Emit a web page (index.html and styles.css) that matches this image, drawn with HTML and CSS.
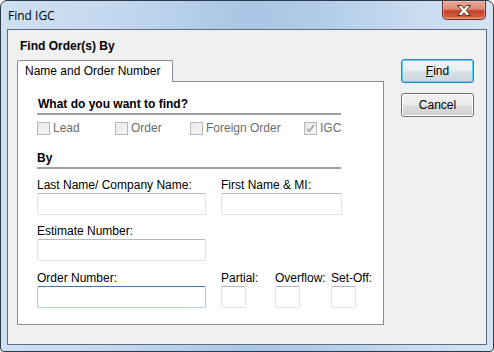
FILE: index.html
```html
<!DOCTYPE html>
<html>
<head>
<meta charset="utf-8">
<link rel="stylesheet" href="styles.css">
</head>
<body>
<div class="window">
  <div class="titlebar">
    <span class="title">Find IGC</span>
    <div class="close">
      <svg width="20" height="13" viewBox="0 0 20 13">
        <path d="M3.5 1.5 L7.5 1.5 L10 4.3 L12.5 1.5 L16.5 1.5 L12.3 6.5 L16.5 11.5 L12.5 11.5 L10 8.7 L7.5 11.5 L3.5 11.5 L7.7 6.5 Z" fill="#ffffff" stroke="#5a2a20" stroke-width="1" stroke-linejoin="round"/>
      </svg>
    </div>
  </div>
  <div class="client">
    <div class="left">
      <div class="header">Find Order(s) By</div>
      <div class="tabs"><div class="tab">Name and Order Number</div></div>
      <div class="panel">
        <div class="section-head">What do you want to find?</div>
        <div class="checks">
          <label class="check c-lead"><span class="box"></span>Lead</label>
          <label class="check c-order"><span class="box"></span>Order</label>
          <label class="check c-foreign"><span class="box"></span>Foreign Order</label>
          <label class="check"><span class="box checked"><svg width="11" height="11" viewBox="0 0 11 11"><path d="M2 5.5 L4.3 8.2 L9 2" fill="none" stroke="#a3a3a3" stroke-width="1.6"/></svg></span>IGC</label>
        </div>
        <div class="section-head by">By</div>
        <div class="row r1">
          <div class="field f-wide"><div class="lbl">Last Name/ Company Name:</div><div class="input w-wide"></div></div>
          <div class="field"><div class="lbl">First Name &amp; MI:</div><div class="input w-mid"></div></div>
        </div>
        <div class="row r2">
          <div class="field f-wide"><div class="lbl">Estimate Number:</div><div class="input w-wide"></div></div>
        </div>
        <div class="row r3">
          <div class="field f-wide"><div class="lbl">Order Number:</div><div class="input w-wide focus"></div></div>
          <div class="field f-partial"><div class="lbl">Partial:</div><div class="input w-small"></div></div>
          <div class="field f-overflow"><div class="lbl">Overflow:</div><div class="input w-small"></div></div>
          <div class="field"><div class="lbl">Set-Off:</div><div class="input w-small"></div></div>
        </div>
      </div>
    </div>
    <div class="buttons">
      <button class="btn default"><u>F</u>ind</button>
      <button class="btn">Cancel</button>
    </div>
  </div>
</div>
</body>
</html>
```

FILE: styles.css
```css
* { box-sizing: border-box; }
html, body { margin: 0; padding: 0; background: #ffffff; }
body { font-family: "Liberation Sans", Arial, sans-serif; font-size: 12px; color: #000; }

.window {
  width: 494px;
  height: 352px;
  border: 1px solid #2e3a48;
  border-radius: 7px 7px 4px 4px;
  padding: 0 6px 6px;
  background: linear-gradient(90deg, #cfe0f2 0%, #c2d7ee 25%, #a9c6e4 50%, #b2cce8 65%, #c9dcf0 85%, #d3e3f4 100%);
  display: flex;
  flex-direction: column;
}

.titlebar {
  height: 28px;
  display: flex;
  justify-content: space-between;
  align-items: flex-start;
}
.title {
  font-family: "Open Sans", "Liberation Sans", sans-serif;
  font-size: 12px;
  line-height: 16px;
  margin-top: 7px;
  margin-left: 1px;
  color: #000;
}
.close {
  width: 44px;
  height: 19px;
  margin-right: 1px;
  border: 1px solid #6b2a1e;
  border-top: none;
  border-radius: 0 0 5px 5px;
  background: linear-gradient(180deg, #e8a898 0%, #dc8a76 45%, #c5412a 55%, #d05a3c 85%, #e08a6a 100%);
  box-shadow: inset 0 0 0 1px rgba(255,210,200,0.45);
  display: flex;
  align-items: center;
  justify-content: center;
}

.client {
  height: 316px;
  border: 1px solid #5d6d80;
  background: #f0f0f0;
  padding: 9px 0 0 9px;
  display: flex;
}

.left { width: 367px; }
.header {
  font-weight: bold;
  line-height: 14px;
  margin-left: 3px;
}
.tabs { margin-top: 7px; display: flex; }
.tab {
  position: relative;
  z-index: 1;
  width: 156px;
  height: 22px;
  margin-bottom: -1px;
  border: 1px solid #898c95;
  border-bottom: none;
  border-radius: 2px 2px 0 0;
  background: #ffffff;
  padding: 3px 0 0 7px;
  line-height: 14px;
  white-space: nowrap;
}
.panel {
  height: 244px;
  border: 1px solid #898c95;
  background: #ffffff;
  padding: 15px 0 0 19px;
}

.section-head {
  width: 304px;
  font-weight: bold;
  line-height: 14px;
  padding: 0 0 2px 1px;
  border-bottom: 2px solid #a0a0a0;
}
.section-head.by { margin-top: 16px; padding-left: 0; }

.checks {
  margin-top: 6px;
  display: flex;
  line-height: 14px;
  color: #6d6d6d;
}
.check { display: flex; align-items: center; }
.c-lead { width: 78px; }
.c-order { width: 75px; }
.c-foreign { width: 114px; }
.box {
  width: 13px;
  height: 13px;
  border: 1px solid #b8b8b8;
  background: linear-gradient(135deg, #e9e9e9 0%, #f6f6f6 100%);
  margin-right: 3px;
  display: flex;
  align-items: center;
  justify-content: center;
}

.row { display: flex; }
.r1 { margin-top: 9px; }
.r2 { margin-top: 9px; }
.r3 { margin-top: 10px; }
.field { display: flex; flex-direction: column; }
.lbl { line-height: 14px; margin-bottom: 1px; white-space: nowrap; }
.f-wide { width: 184px; }
.f-partial { width: 54px; }
.f-overflow { width: 56px; }

.input {
  height: 22px;
  border: 1px solid #dfe3e9;
  border-top-color: #b4b7bd;
  border-radius: 2px;
  background: #ffffff;
}
.w-wide { width: 169px; }
.w-mid { width: 121px; }
.w-small { width: 25px; }
.input.focus {
  border-color: #b3d2ea;
  border-top-color: #3d7bad;
  border-left-color: #a4c4df;
  border-right-color: #a4c4df;
}

.buttons {
  margin-left: 17px;
  margin-top: 20px;
  display: flex;
  flex-direction: column;
  gap: 10px;
}
.btn {
  width: 73px;
  height: 24px;
  border: 1px solid #707070;
  border-radius: 3px;
  background: linear-gradient(180deg, #f2f2f2 0%, #ebebeb 48%, #dddddd 52%, #cfcfcf 100%);
  box-shadow: inset 0 0 0 1px #fcfcfc;
  font-family: "Liberation Sans", Arial, sans-serif;
  font-size: 12px;
  color: #000;
  padding: 0;
  line-height: 14px;
}
.btn.default {
  border-color: #3c7fb1;
  box-shadow: inset 0 0 0 1px #5fd0f4;
  background: linear-gradient(180deg, #f0f4f6 0%, #e8eef1 48%, #d8e1e6 52%, #ccd6dc 100%);
}
```
